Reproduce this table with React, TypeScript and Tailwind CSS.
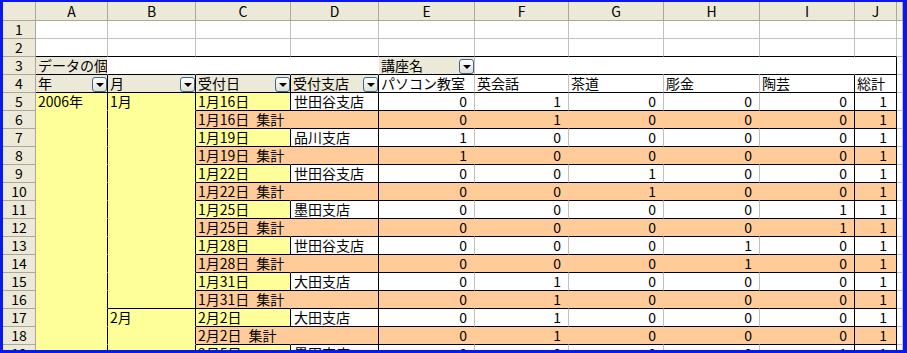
import clsx from "clsx";
import type { ReactNode } from "react";

type Row = {
  n: number;
  a?: string;
  b?: string;
  c: string;
  d?: string;
  v: number[];
  sum?: boolean;
  bEnd?: boolean;
};

const letters = ["A", "B", "C", "D", "E", "F", "G", "H", "I", "J"];
const courses = ["パソコン教室", "英会話", "茶道", "彫金", "陶芸", "総計"];

const data: Row[] = [
  { n: 5, a: "2006年", b: "1月", c: "1月16日", d: "世田谷支店", v: [0, 1, 0, 0, 0, 1] },
  { n: 6, c: "1月16日\u2002集計", v: [0, 1, 0, 0, 0, 1], sum: true },
  { n: 7, c: "1月19日", d: "品川支店", v: [1, 0, 0, 0, 0, 1] },
  { n: 8, c: "1月19日\u2002集計", v: [1, 0, 0, 0, 0, 1], sum: true },
  { n: 9, c: "1月22日", d: "世田谷支店", v: [0, 0, 1, 0, 0, 1] },
  { n: 10, c: "1月22日\u2002集計", v: [0, 0, 1, 0, 0, 1], sum: true },
  { n: 11, c: "1月25日", d: "墨田支店", v: [0, 0, 0, 0, 1, 1] },
  { n: 12, c: "1月25日\u2002集計", v: [0, 0, 0, 0, 1, 1], sum: true },
  { n: 13, c: "1月28日", d: "世田谷支店", v: [0, 0, 0, 1, 0, 1] },
  { n: 14, c: "1月28日\u2002集計", v: [0, 0, 0, 1, 0, 1], sum: true },
  { n: 15, c: "1月31日", d: "大田支店", v: [0, 1, 0, 0, 0, 1] },
  { n: 16, c: "1月31日\u2002集計", v: [0, 1, 0, 0, 0, 1], sum: true, bEnd: true },
  { n: 17, b: "2月", c: "2月2日", d: "大田支店", v: [0, 1, 0, 0, 0, 1] },
  { n: 18, c: "2月2日\u2002集計", v: [0, 1, 0, 0, 0, 1], sum: true },
  { n: 19, c: "2月5日", d: "墨田支店", v: [0, 0, 0, 0, 1, 1] },
];

function Cell({ className, children }: { className?: string; children?: ReactNode }) {
  return (
    <div
      className={clsx(
        "flex h-[18px] items-end overflow-hidden whitespace-nowrap border-r border-b leading-[17px]",
        className
      )}
    >
      {children}
    </div>
  );
}

// pivot field dropdown button
function Drop() {
  return (
    <span className="ml-auto flex h-[15px] w-[15px] shrink-0 items-center justify-center rounded-[3px] border border-[#3a6896] bg-linear-to-b from-white to-[#e2dfd0]">
      <span className="mt-[1px] h-0 w-0 border-x-[4px] border-t-[4px] border-x-transparent border-t-black" />
    </span>
  );
}

function RowHead({ n }: { n: number }) {
  return (
    <Cell className="items-center justify-center border-[#aca899] bg-[#ece9d8]">{n}</Cell>
  );
}

function Blank({ className }: { className?: string }) {
  return <Cell className={clsx("bg-white", className)} />;
}

export default function App() {
  return (
    <div className="h-[353px] w-[907px] bg-[#0818f0] pt-[2px] pr-[4px] pb-[3px] pl-[3px] text-[14px] text-black [font-family:'Noto_Sans_CJK_JP',sans-serif]">
      <div className="h-full overflow-hidden bg-white">
        <div className="grid grid-cols-[33px_72px_88px_95px_88px_96px_94px_95px_96px_95px_42px_6px]">
          {/* column headers */}
          <Cell className="h-[19px] border-[#aca899] bg-[#ece9d8]" />
          {letters.map((l) => (
            <Cell
              key={l}
              className="h-[19px] items-center justify-center border-[#aca899] bg-[#ece9d8]"
            >
              {l}
            </Cell>
          ))}
          <Cell className="h-[19px] border-[#aca899] bg-[#ece9d8]" />

          {/* rows 1-2 */}
          <RowHead n={1} />
          {letters.map((l) => (
            <Blank key={l} className="border-[#c0c0c0]" />
          ))}
          <Blank className="border-[#c0c0c0]" />
          <RowHead n={2} />
          {letters.map((l) => (
            <Blank key={l} className="border-r-[#c0c0c0] border-b-black" />
          ))}
          <Blank className="border-[#c0c0c0]" />

          {/* row 3 */}
          <RowHead n={3} />
          <Cell className="border-r-white border-b-black bg-[#ece9d8] pl-[2px]">データの個</Cell>
          <Blank className="border-r-white border-b-black" />
          <Blank className="border-r-white border-b-black" />
          <Blank className="border-r-white border-b-black" />
          <Cell className="border-r-[#c0c0c0] border-b-black bg-[#ece9d8] pl-[2px]">
            講座名
            <Drop />
          </Cell>
          <Blank className="border-r-white border-b-black" />
          <Blank className="border-r-white border-b-black" />
          <Blank className="border-r-white border-b-black" />
          <Blank className="border-r-white border-b-black" />
          <Blank className="border-r-black border-b-black" />
          <Blank className="border-[#c0c0c0]" />

          {/* row 4 */}
          <RowHead n={4} />
          {["年", "月", "受付日", "受付支店"].map((f) => (
            <Cell key={f} className="border-r-black border-b-black bg-[#ece9d8] pl-[2px]">
              {f}
              <Drop />
            </Cell>
          ))}
          {courses.map((c, i) => (
            <Cell
              key={c}
              className={clsx(
                "border-b-black bg-white pl-[2px]",
                i < 4 ? "border-r-[#c0c0c0]" : "border-r-black"
              )}
            >
              {c}
            </Cell>
          ))}
          <Blank className="border-[#c0c0c0]" />

          {/* pivot body */}
          {data.map((r) => (
            <RowCells key={r.n} r={r} />
          ))}
        </div>
      </div>
    </div>
  );
}

function RowCells({ r }: { r: Row }) {
  return (
    <>
      <RowHead n={r.n} />
      <Cell className="border-r-black border-b-[#ffff99] bg-[#ffff99] pl-[2px]">{r.a}</Cell>
      <Cell
        className={clsx(
          "border-r-black bg-[#ffff99] pl-[2px]",
          r.bEnd ? "border-b-black" : "border-b-[#ffff99]"
        )}
      >
        {r.b}
      </Cell>
      <Cell
        className={clsx(
          "border-b-black pl-[2px]",
          r.sum ? "border-r-[#ffcc99] bg-[#ffcc99]" : "border-r-black bg-[#ffff99]"
        )}
      >
        {r.c}
      </Cell>
      <Cell
        className={clsx(
          "border-r-black border-b-black pl-[3px]",
          r.sum ? "bg-[#ffcc99]" : "bg-white"
        )}
      >
        {r.d}
      </Cell>
      {r.v.map((x, i) => (
        <Cell
          key={i}
          className={clsx(
            "justify-end border-b-black",
            i === 5 ? "pr-[9px]" : "pr-[7px]",
            r.sum ? "bg-[#ffcc99]" : "bg-white",
            i >= 4
              ? "border-r-black"
              : r.sum
                ? "border-r-[#ffcc99]"
                : "border-r-[#c0c0c0]"
          )}
        >
          {x}
        </Cell>
      ))}
      <Blank className="border-[#c0c0c0]" />
    </>
  );
}
